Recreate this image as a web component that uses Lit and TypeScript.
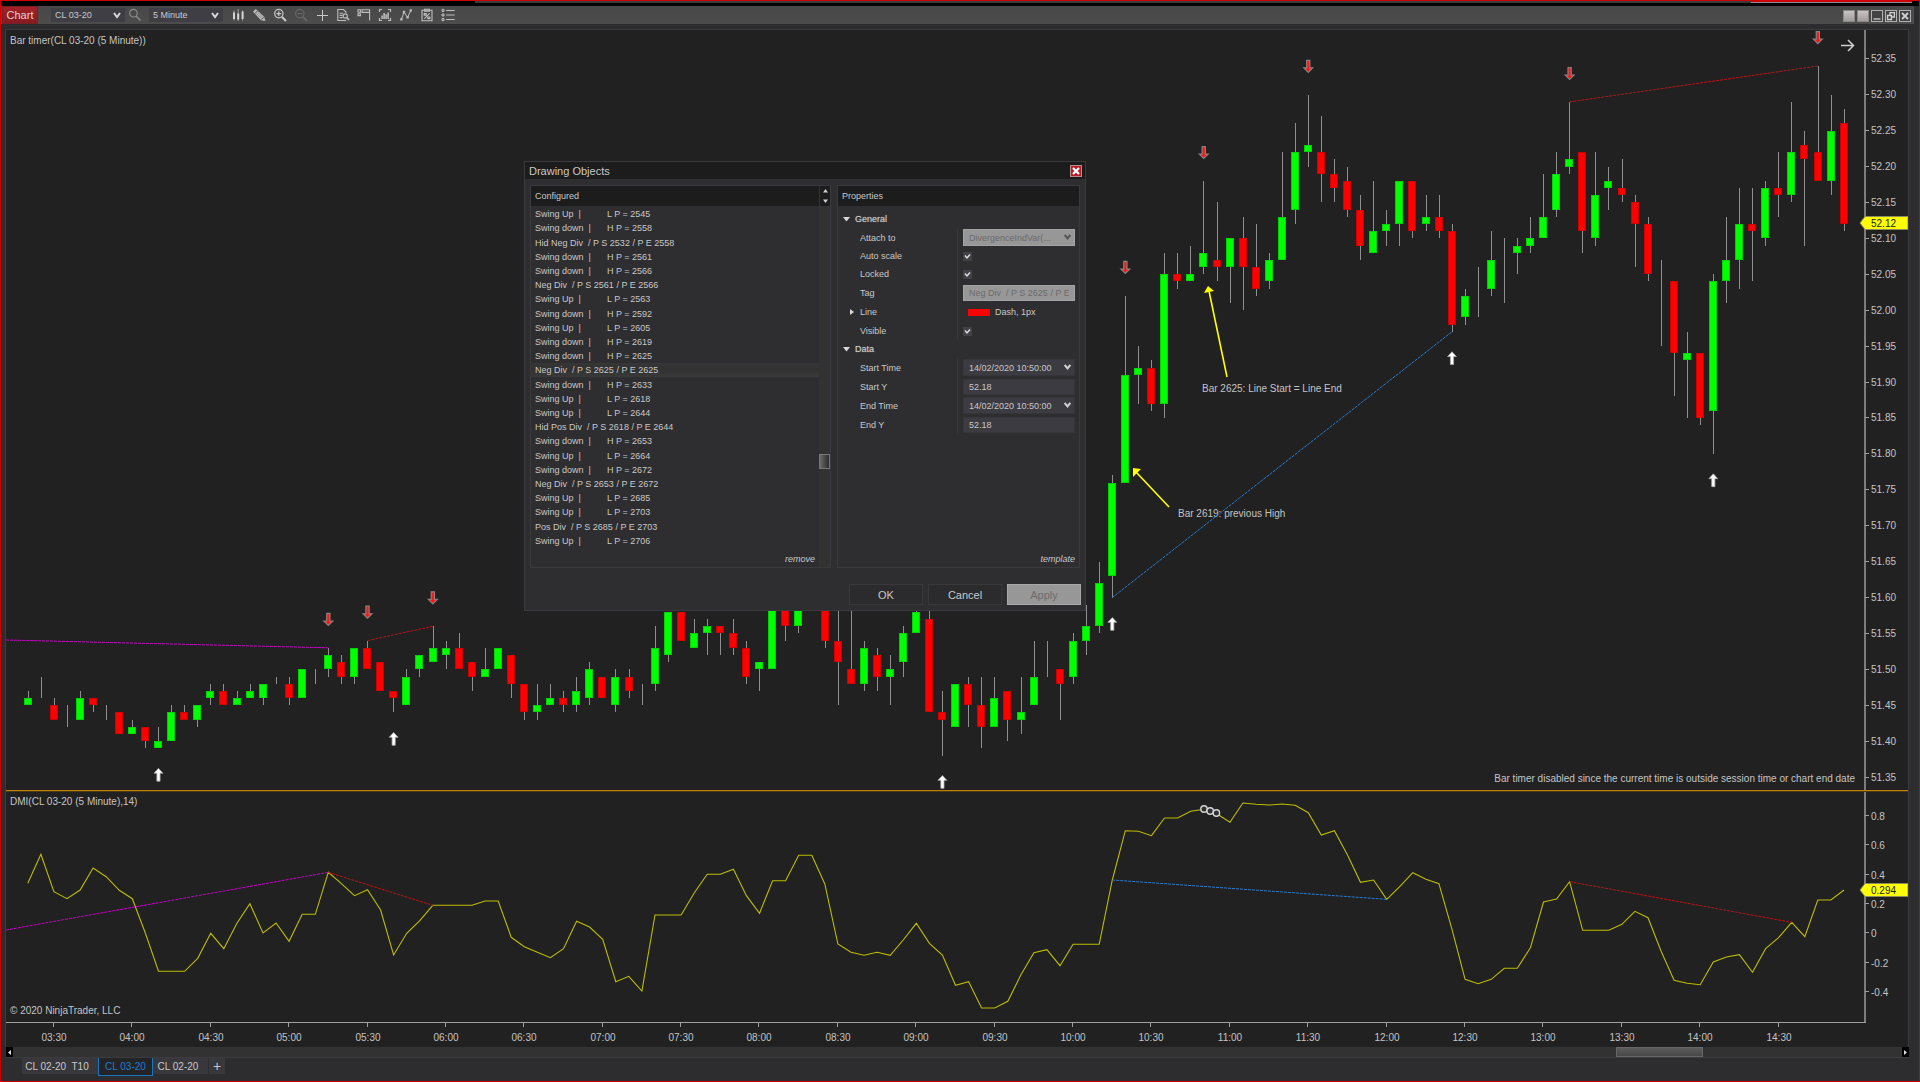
import { LitElement, html, svg, css } from "lit";
import { customElement, property, state } from "lit/decorators.js";
import { classMap } from "lit/directives/class-map.js";

/* ---------- market data ---------- */

type Kind = "up" | "down" | "flat";
interface Bar { kind: Kind; top: number; bottom: number; high: number; low: number }

// One entry per five-minute bar: kind, body top, body bottom, high, low (hundredths above 50.00).
const RAW = `
u146,145,147,145 f149,146,149,146 d145,143,146,143 f145,142,145,142 u146,143,147,143 d146,145,146,144
f145,143,145,143 d144,141,144,141 u142,141,143,141 d142,140,142,139 u140,139,142,139 u144,140,145,140
d144,143,145,143 u145,143,145,142 u147,146,148,145 d147,145,148,145 u146,145,147,145 u147,146,148,146
u148,146,148,145 f149,148,149,148 d148,146,149,145 u150,146,150,146 f150,148,150,148 u152,150,153,149
d151,149,152,148 u153,149,153,148 d153,150,154,150 d151,147,151,147 d147,146,147,144 u149,145,150,145
u152,150,152,149 u153,151,156,151 u153,152,154,150 d153,150,155,150 d151,149,151,147 u150,149,153,149
u153,150,153,150 d152,148,152,146 d148,144,148,143 u145,144,148,143 u146,145,148,145 d146,145,147,144
u147,145,149,144 u150,146,151,145 d149,146,149,146 u149,145,150,144 d149,147,150,146 f148,145,148,145
u153,148,156,147 u158,152,158,151 d158,154,158,154 u155,153,157,153 u156,155,157,152 d156,155,156,152
d155,153,157,152 d153,149,154,148 u151,150,151,147 u160,150,160,150 d160,156,160,154 u160,156,160,155
f162,160,162,160 d160,154,160,153 d154,151,160,145 d150,148,160,148 u153,148,154,147 d152,149,153,147
u150,149,152,145 u155,151,156,149 u158,155,159,155 d157,144,159,144 d144,143,147,138 u148,142,148,142
d148,145,149,142 d145,142,149,139 u146,142,149,142 d147,143,147,140 u144,143,149,141 u149,145,154,145
f154,149,154,149 d150,148,150,143 u154,149,155,148 u156,154,159,152 u162,156,165,155 u176,163,177,160
u191,176,202,176 u192,191,195,187 d192,187,193,186 u205,187,208,185 d205,204,208,203 u205,204,209,204
u208,206,218,205 d207,206,215,204 u210,206,210,201 d210,206,213,200 d206,203,212,202 u207,204,208,203
u213,207,222,207 u222,214,226,212 u223,222,230,220 d222,219,227,215 d219,217,221,215 d218,214,220,213
d214,209,216,207 u211,208,218,208 u212,211,214,209 u218,212,218,209 d218,211,218,210 u213,212,216,211
d213,211,216,210 d211,198,212,197 u202,199,203,198 f206,199,206,199 u207,203,211,202 f210,201,210,201
u209,208,210,205 u210,209,213,208 u213,210,219,210 u219,214,222,213 u221,220,229,219 d222,211,222,208
u216,210,222,209 u218,217,220,214 d217,216,221,215 d215,212,216,206 d212,205,213,204 f207,195,207,195
d204,194,204,188 u194,193,197,185 d194,185,194,184 u204,186,205,180 u207,204,213,201 u212,207,217,203
d212,211,217,204 u217,210,218,209 d217,216,222,213 u222,216,229,215 d223,221,225,209 d222,218,234,218
u225,218,230,216 d226,212,228,211`;

const BARS: Bar[] = RAW.trim().split(/\s+/).map((entry) => {
  const [top, bottom, high, low] = entry.slice(1).split(",").map(Number);
  const kind: Kind = entry[0] === "u" ? "up" : entry[0] === "d" ? "down" : "flat";
  return { kind, top, bottom, high, low };
});

// Oscillator trace, in thirds of a unit below the pane origin.
const DMI = [
  310, 223, 335, 356, 330, 264, 290, 331, 356, 460, 574, 574, 574, 535, 460, 506, 430, 371, 459, 429,
  484, 403, 403, 277, 311, 347, 329, 390, 525, 460, 422, 376, 376, 376, 376, 363, 363, 472, 500, 517,
  533, 506, 424, 441, 478, 605, 589, 633, 405, 405, 405, 339, 283, 283, 268, 347, 400, 302, 302, 226,
  226, 312, 492, 517, 526, 517, 526, 480, 430, 490, 525, 616, 605, 684, 684, 664, 585, 518, 509, 557,
  493, 493, 493, 300, 152, 154, 167, 114, 114, 94, 88, 101, 127, 69, 73, 75, 72, 76, 98, 165,
  152, 225, 307, 300, 358, 320, 278, 298, 311, 448, 598, 611, 598, 565, 565, 503, 366, 357, 305, 451,
  451, 451, 433, 394, 413, 513, 601, 610, 614, 546, 531, 524, 577, 506, 473, 427, 470, 360, 360, 330,
];

const barX = (i: number) => 27.8 + i * 13.066;
const priceY = (tick: number) => 58.8 + (235 - tick) * 7.183;
const dmiY = (third: number) => 780 + third / 3;

const SELL_MARKS = [23, 26, 31, 84, 90, 98, 118, 137];
const BUY_MARKS = [10, 28, 70, 83, 109, 129];
const AXIS_X = 1865;

const pad = (n: number) => String(n).padStart(2, "0");

/* ---------- chart ---------- */

@customElement("price-chart")
class PriceChart extends LitElement {
  static styles = css`
    :host { display: flex; flex-direction: column; font-family: "Liberation Sans", Arial, sans-serif; }
    svg { display: block; width: 100%; height: auto; }
    text { font-size: 10px; fill: #c4c4c4; }
    .splitter { height: 2px; background: linear-gradient(#c08000 50%, #4e3c18 50%); }
    .wick { stroke: #8e8e8e; stroke-width: 1; shape-rendering: crispEdges; }
    .up { fill: #00ff00; stroke: #00d400; }
    .down { fill: #ff0000; stroke: #d00000; }
    .body { stroke-width: 1; shape-rendering: crispEdges; }
    .axis { stroke: #7c7c7c; stroke-width: 2; shape-rendering: crispEdges; }
    .tick { stroke: #a0a0a0; stroke-width: 1; shape-rendering: crispEdges; }
    .trend { fill: none; stroke-width: 1; }
    .magenta { stroke: #c800c8; stroke-dasharray: 3 1; }
    .darkred { stroke: #b81414; stroke-dasharray: 3 1; }
    .blue { stroke: #2a7cd0; stroke-dasharray: 3 1; }
    .dmi { fill: none; stroke: #bcbc00; stroke-width: 1.1; }
    .sell { fill: #ff1414; stroke: #8c8080; stroke-width: 1.2; }
    .buy { fill: #ffffff; stroke: #a8a8a8; stroke-width: 0.8; }
    .note { stroke: #ffff00; stroke-width: 1.6; }
    .note-head { fill: #ffff00; }
    .tag { fill: #ffff00; stroke: #8c8c5a; stroke-width: 1; }
    .tag-text { fill: #202020; }
    .ring { fill: #303030; stroke: #d4d4d4; stroke-width: 1.4; }
    .jump { fill: none; stroke: #d0d0d0; stroke-width: 1.5; }
    .end { text-anchor: end; }
    .mid { text-anchor: middle; }
  `;

  private bar(b: Bar, i: number) {
    const x = Math.round(barX(i) - 0.3);
    const yh = Math.round(priceY(b.high));
    const yl = Math.round(priceY(b.low));
    const yt = Math.round(priceY(b.top));
    const yb = Math.round(priceY(b.bottom));
    return svg`
      <line class="wick" x1=${x + 0.5} x2=${x + 0.5} y1=${yh} y2=${yl}></line>
      ${b.kind === "flat" ? null : svg`
        <rect class="body ${b.kind}" x=${x - 3.5} y=${yt + 0.5} width="7" height=${yb - yt - 1}></rect>`}`;
  }

  private sellMark(i: number) {
    const x = barX(i);
    const y = priceY(BARS[i].high) - 22;
    return svg`<path class="sell" d="M${x - 1.6} ${y - 12.4}h3.2v7.6h2.8L${x} ${y - 0.4}L${x - 4.4} ${y - 4.8}h2.8z"></path>`;
  }

  private buyMark(i: number) {
    const x = barX(i);
    const y = priceY(BARS[i].low) + 20;
    return svg`<path class="buy" d="M${x} ${y}L${x + 4.4} ${y + 4.8}h-2.8v8h-3.2v-8h-2.8z"></path>`;
  }

  private valueTag(y: number, label: string) {
    return svg`
      <path class="tag" d="M1860 ${y}L1865 ${y - 6.5}H1908V${y + 6.5}H1865z"></path>
      <text class="tag-text" x="1871" y=${y + 4}>${label}</text>`;
  }

  private trend(cls: string, x1: number, y1: number, x2: number, y2: number) {
    return svg`<line class="trend ${cls}" x1=${x1} y1=${y1} x2=${x2} y2=${y2}></line>`;
  }

  private pricePane() {
    const levels = Array.from({ length: 21 }, (_, i) => 235 - i * 5);
    return html`
      <svg viewBox="6 30 1902 760" role="img" aria-label="CL 03-20 price">
        ${BARS.map((b, i) => this.bar(b, i))}
        ${this.trend("magenta", 6, 640, barX(23), priceY(153))}
        ${this.trend("darkred", barX(26), priceY(154), barX(31), priceY(156))}
        ${this.trend("darkred", barX(118), priceY(229), barX(137), priceY(234))}
        <text x="1178" y="517">Bar 2619: previous High</text>
        <text x="1202" y="392">Bar 2625: Line Start = Line End</text>
        ${this.trend("blue", barX(83), priceY(160), barX(109), priceY(197))}
        ${SELL_MARKS.map((i) => this.sellMark(i))}
        ${BUY_MARKS.map((i) => this.buyMark(i))}
        <line class="note" x1="1227" y1="377" x2="1209" y2="291"></line>
        <path class="note-head" d="M1208 286L1214 291L1204 293z"></path>
        <line class="note" x1="1169" y1="507" x2="1136" y2="472"></line>
        <path class="note-head" d="M1133 468L1141 469L1133 477z"></path>
        <text x="10" y="44">Bar timer(CL 03-20 (5 Minute))</text>
        <text class="end" x="1855" y="782">Bar timer disabled since the current time is outside session time or chart end date</text>
        <path class="jump" d="M1841 45.5H1853M1848 40L1853.5 45.5L1848 51"></path>
        <line class="axis" x1=${AXIS_X} x2=${AXIS_X} y1="30" y2="790"></line>
        ${levels.map((t) => {
          const y = Math.round(priceY(t) - 0.5);
          return svg`
            <line class="tick" x1=${AXIS_X} x2=${AXIS_X + 4} y1=${y + 0.5} y2=${y + 0.5}></line>
            <text x="1871" y=${y + 4}>${(50 + t / 100).toFixed(2)}</text>`;
        })}
        ${this.valueTag(223, "52.12")}
      </svg>`;
  }

  private dmiPane() {
    const points = DMI.map((v, i) => `${barX(i).toFixed(1)},${dmiY(v).toFixed(1)}`).join(" ");
    const levels = ["0.8", "0.6", "0.4", "0.2", "0", "-0.2", "-0.4"];
    return html`
      <svg viewBox="6 792 1902 231" role="img" aria-label="DMI indicator">
        <polyline class="dmi" points=${points}></polyline>
        ${this.trend("magenta", 6, 930, barX(23), dmiY(277))}
        ${this.trend("darkred", barX(23), dmiY(277), barX(31), dmiY(376))}
        ${this.trend("blue", barX(83), dmiY(300), barX(104), dmiY(358))}
        ${this.trend("darkred", barX(118), dmiY(305), barX(135), dmiY(427))}
        ${[0, 1, 2].map((n) => svg`<circle class="ring" cx=${1204 + n * 6.2} cy=${809 + n * 2} r="3.2"></circle>`)}
        <text x="10" y="805">DMI(CL 03-20 (5 Minute),14)</text>
        <text x="10" y="1014">© 2020 NinjaTrader, LLC</text>
        <line class="axis" x1=${AXIS_X} x2=${AXIS_X} y1="792" y2="1022"></line>
        <line class="tick" x1="6" x2=${AXIS_X + 1} y1="1022.5" y2="1022.5"></line>
        ${levels.map((label, i) => {
          const y = Math.round(816 + i * 29.3);
          return svg`
            <line class="tick" x1=${AXIS_X} x2=${AXIS_X + 4} y1=${y - 0.5} y2=${y - 0.5}></line>
            <text x="1871" y=${y + 4}>${label}</text>`;
        })}
        ${this.valueTag(890, "0.294")}
      </svg>`;
  }

  private timeAxis() {
    const labels = Array.from({ length: 23 }, (_, i) => {
      const minutes = 210 + i * 30;
      return { x: Math.round(barX(2 + i * 6)), text: `${pad(Math.floor(minutes / 60))}:${pad(minutes % 60)}` };
    });
    return html`
      <svg viewBox="6 1023 1902 24" role="img" aria-label="Time axis">
        ${labels.map((l) => svg`
          <line class="tick" x1=${l.x - 0.5} x2=${l.x - 0.5} y1="1023" y2="1027"></line>
          <text class="mid" x=${l.x} y="1041">${l.text}</text>`)}
      </svg>`;
  }

  render() {
    return html`${this.pricePane()}<div class="splitter"></div>${this.dmiPane()}${this.timeAxis()}`;
  }
}

/* ---------- drawing objects dialog ---------- */

const swing = (dir: "Up" | "down", at: number) => ({
  lead: `Swing ${dir}  |`,
  rest: `${dir === "Up" ? "L" : "H"} P = ${at}`,
});
const div = (name: string, from: number, to: number) => ({ lead: `${name} Div  / P S ${from} / P E ${to}`, rest: "" });

const OBJECTS = [
  swing("Up", 2545), swing("down", 2558), div("Hid Neg", 2532, 2558), swing("down", 2561),
  swing("down", 2566), div("Neg", 2561, 2566), swing("Up", 2563), swing("down", 2592),
  swing("Up", 2605), swing("down", 2619), swing("down", 2625), div("Neg", 2625, 2625),
  swing("down", 2633), swing("Up", 2618), swing("Up", 2644), div("Hid Pos", 2618, 2644),
  swing("down", 2653), swing("Up", 2664), swing("down", 2672), div("Neg", 2653, 2672),
  swing("Up", 2685), swing("Up", 2703), div("Pos", 2685, 2703), swing("Up", 2706),
];

@customElement("drawing-objects-dialog")
class DrawingObjectsDialog extends LitElement {
  @state() private selected = 11;

  static styles = css`
    :host { display: block; font: 9px "Liberation Sans", Arial, sans-serif; color: #c8c8c8; }
    * { box-sizing: border-box; }
    button, input, select { font: inherit; color: inherit; margin: 0; border-radius: 0; }
    .window { height: 100%; display: flex; flex-direction: column; background: #2e2e30; border: 1px solid #3a3a3e; }
    .title { display: flex; align-items: center; justify-content: space-between; height: 17px; padding: 0 3px 0 4px; background: #1c1c1c; font-size: 11px; flex: none; }
    .title h1 { margin: 0; font: inherit; }
    .close { display: flex; width: 12px; height: 12px; padding: 0; background: #b3202a; border: 1px solid #b98c8c; }
    .close svg { width: 10px; height: 10px; }
    .panels { flex: 1; display: grid; grid-template-columns: 301px 1fr; gap: 6px; padding: 6px 5px 0 5px; min-height: 0; }
    .panel { display: flex; flex-direction: column; border: 1px solid #3a3a3e; min-height: 0; }
    .head { display: flex; align-items: center; justify-content: space-between; height: 20px; padding-left: 4px; background: #1c1c1c; flex: none; }
    .head h2 { margin: 0; font: inherit; }
    .spin { display: flex; flex-direction: column; justify-content: space-between; align-items: center; width: 11px; height: 100%; padding: 3px 0; border-left: 1px solid #333336; }
    .spin svg { width: 5px; height: 4px; fill: #d0d0d0; }
    .body { flex: 1; display: grid; grid-template-columns: 1fr 11px; min-height: 0; }
    .list { display: grid; grid-template-rows: repeat(24, 1fr); height: 341px; margin: 1px 0 0; padding: 0; list-style: none; }
    .item { display: grid; grid-template-columns: 72px 1fr; align-items: center; width: 100%; height: 100%; padding: 0 4px; background: none; border: 0; text-align: left; white-space: pre; }
    .item.wide { display: block; }
    .item.current { background: linear-gradient(#363636, #323232, #3a3a3a); }
    .left { display: flex; flex-direction: column; justify-content: space-between; }
    .link { align-self: flex-end; padding: 0 4px 3px 0; background: none; border: 0; font-style: italic; }
    .track { background: #323232; display: flex; flex-direction: column; }
    .track::before { content: ""; flex: 249 0 0; }
    .track::after { content: ""; flex: 98 0 0; }
    .thumb { height: 15px; background: linear-gradient(90deg, #6a6a6a, #2c2c2c); border: 1px solid #777; }
    .props { flex: 1; padding-top: 4px; }
    .group { display: flex; align-items: center; gap: 5px; height: 18px; margin: 0; padding: 0 0 0 5px; background: none; border: 0; text-shadow: 0 0 1px #999; }
    .group svg { width: 7px; height: 5px; fill: #d8d8d8; }
    .row { display: grid; grid-template-columns: 98px 1fr; align-items: center; height: 19px; padding: 0 4px 0 22px; position: relative; }
    .cap { align-self: stretch; display: flex; align-items: center; border-right: 1px solid #38383c; }
    .row.short { height: 18px; }
    .row.tall { height: 20px; }
    .marker { position: absolute; left: 12px; top: 7px; width: 4px; height: 6px; fill: #d8d8d8; }
    .field { position: relative; display: flex; margin-left: 5px; }
    .field svg { position: absolute; right: 4px; top: 5px; width: 7px; height: 6px; fill: none; stroke: #d0d0d0; stroke-width: 2; pointer-events: none; }
    select, .text { appearance: none; width: 100%; height: 17px; padding: 0 5px; background: #3c3b42; border: 1px solid #35353a; outline: none; }
    .text { height: 16px; }
    select:disabled, .text:disabled { background: #979797; border-color: #a4a4a4; color: #6c6c6c; opacity: 1; }
    .dim svg { stroke: #555; }
    .box { display: flex; width: 9px; height: 9px; margin-left: 5px; position: relative; }
    .box input { appearance: none; width: 9px; height: 9px; background: #424148; }
    .box svg { position: absolute; inset: 1px; width: 7px; height: 7px; fill: none; stroke: #e0e0e0; stroke-width: 1.4; visibility: hidden; pointer-events: none; }
    .box input:checked + svg { visibility: visible; }
    .stroke { display: flex; align-items: center; gap: 5px; margin-left: 5px; padding: 0 0 0 5px; background: none; border: 0; }
    .swatch { width: 22px; height: 7px; background: #ff0000; }
    .panel-foot { display: flex; justify-content: flex-end; }
    .actions { display: flex; justify-content: flex-end; gap: 5px; padding: 16px 4px 5px 0; }
    .btn { width: 74px; height: 21px; padding: 0; background: #2b2b2d; border: 1px solid #39393d; font-size: 11px; }
    .btn:disabled { background: #979797; border-color: #a8a8a8; color: #6c6c6c; }
  `;

  private chevron() {
    return html`<svg viewBox="0 0 7 6" aria-hidden="true"><path d="M0.7 1L3.5 4.4L6.3 1"></path></svg>`;
  }

  private check(label: string, id: string) {
    return html`
      <div class="row short">
        <label class="cap" for=${id}>${label}</label>
        <span class="box"><input id=${id} type="checkbox" checked />
          <svg viewBox="0 0 7 7" aria-hidden="true"><path d="M1 2.5L3 5L6 1.5"></path></svg></span>
      </div>`;
  }

  private choice(label: string, id: string, value: string, disabled = false) {
    return html`
      <div class="row">
        <label class="cap" for=${id}>${label}</label>
        <span class=${classMap({ field: true, dim: disabled })}>
          <select id=${id} ?disabled=${disabled}><option>${value}</option></select>${this.chevron()}
        </span>
      </div>`;
  }

  private entry(label: string, id: string, value: string, disabled = false) {
    return html`
      <div class="row">
        <label class="cap" for=${id}>${label}</label>
        <span class="field"><input class="text" id=${id} type="text" .value=${value} ?disabled=${disabled} /></span>
      </div>`;
  }

  private group(label: string) {
    return html`<button class="group"><svg viewBox="0 0 7 5" aria-hidden="true"><path d="M0 0h7L3.5 4.5z"></path></svg>${label}</button>`;
  }

  render() {
    return html`
      <div class="window" role="dialog" aria-label="Drawing Objects">
        <div class="title">
          <h1>Drawing Objects</h1>
          <button class="close" aria-label="Close">
            <svg viewBox="0 0 10 10"><path d="M2 2L8 8M8 2L2 8" stroke="#fff" stroke-width="2.2"></path></svg>
          </button>
        </div>
        <div class="panels">
          <section class="panel">
            <div class="head">
              <h2>Configured</h2>
              <span class="spin">
                <svg viewBox="0 0 5 4"><path d="M2.5 0L5 3.5H0z"></path></svg>
                <svg viewBox="0 0 5 4"><path d="M2.5 4L5 0.5H0z"></path></svg>
              </span>
            </div>
            <div class="body">
              <div class="left">
                <ul class="list">
                  ${OBJECTS.map((o, i) => html`
                    <li><button class=${classMap({ item: true, wide: !o.rest, current: i === this.selected })}
                      @click=${() => (this.selected = i)}><span>${o.lead}</span>${o.rest ? html`<span>${o.rest}</span>` : null}</button></li>`)}
                </ul>
                <button class="link">remove</button>
              </div>
              <div class="track"><div class="thumb"></div></div>
            </div>
          </section>
          <section class="panel">
            <div class="head"><h2>Properties</h2></div>
            <div class="props">
              ${this.group("General")}
              ${this.choice("Attach to", "attach", "DivergenceIndVar(...", true)}
              ${this.check("Auto scale", "autoscale")}
              ${this.check("Locked", "locked")}
              ${this.entry("Tag", "tag", "Neg Div  / P S 2625 / P E 2625", true)}
              <div class="row tall">
                <span class="cap">Line</span>
                <button class="stroke"><span class="swatch"></span>Dash, 1px</button>
                <svg class="marker" viewBox="0 0 4 6"><path d="M0 0L4 3L0 6z"></path></svg>
              </div>
              ${this.check("Visible", "visible")}
              ${this.group("Data")}
              ${this.choice("Start Time", "start-time", "14/02/2020 10:50:00")}
              ${this.entry("Start Y", "start-y", "52.18")}
              ${this.choice("End Time", "end-time", "14/02/2020 10:50:00")}
              ${this.entry("End Y", "end-y", "52.18")}
            </div>
            <div class="panel-foot"><button class="link">template</button></div>
          </section>
        </div>
        <div class="actions">
          <button class="btn">OK</button>
          <button class="btn">Cancel</button>
          <button class="btn" disabled>Apply</button>
        </div>
      </div>`;
  }
}

/* ---------- toolbar icons, drawn on a 14-unit grid ---------- */

const ICONS: Record<string, unknown> = {
  search: svg`<g fill="none" stroke="#8a8a8a" stroke-width="1.2"><circle cx="5.4" cy="5.2" r="3.8"/><path d="M8 8L12.5 12.5" stroke-width="1.6"/></g>`,
  bars: svg`<path d="M3 2.5v10M7.2 1v12M11.6 2.5v10" stroke="#b8b8b8" stroke-width="0.8"/><path d="M2 4.6h2V11H2zM6.2 5.5h2v6h-2zM10.6 3.6h2v7.4h-2z" fill="#d4d4d4"/>`,
  pencil: svg`<path d="M1 3.8L3.8 1L12.2 8.8L13.4 13L9 12.2z" fill="#bcbcbc"/><path d="M2.8 5.6L5.6 2.8" stroke="#4a4a4a"/><path d="M4.4 5.4L10.2 11M5.6 4.2L11.4 9.8" stroke="#777" stroke-width="0.6"/><path d="M9.4 11.6L11.8 9.2" stroke="#4a4a4a" stroke-width="0.8"/>`,
  zoomIn: svg`<g fill="none" stroke="#c8c8c8" stroke-width="1.2"><circle cx="5.8" cy="5.6" r="4.2"/><path d="M3.4 5.6h4.8M5.8 3.2v4.8"/><path d="M9 9L13 13" stroke-width="2.2"/></g>`,
  zoomOut: svg`<g fill="none" stroke="#666" stroke-width="1.2"><circle cx="5.8" cy="5.6" r="4.2"/><path d="M3.4 5.6h4.8"/><path d="M9 9L13 13" stroke-width="2"/></g>`,
  cross: svg`<path d="M7.5 2v11M2 7.5h11" stroke="#c8c8c8" stroke-width="1"/>`,
  doc: svg`<g fill="none" stroke="#bdbdbd" stroke-width="1.1"><path d="M10 5V4L7.4 1.5H1.8v11h8.4"/><path d="M3.6 5.2h3.6M3.6 7.4h3M3.6 9.6h3"/><circle cx="9.2" cy="8" r="2.1"/><path d="M10.8 9.6L13 12" stroke-width="1.6"/></g>`,
  panel: svg`<g fill="none" stroke="#bdbdbd" stroke-width="1.1"><path d="M1 1.8h2.4v2.4H1zM1 5.8h2.4v1.8H1z"/><path d="M5 1.8h7.6v2.6H5z"/><path d="M12.6 4.4v8"/></g>`,
  snapshot: svg`<path d="M1.5 4V1.5H4M10 1.5h2.5V4M12.5 10v2.5H10M4 12.5H1.5V10" fill="none" stroke="#c0c0c0" stroke-width="1.2"/><path d="M3.4 7.4h1.4V11H3.4zM5.4 5h1.4v6H5.4zM7.4 6.2h1.4V11H7.4zM9.4 4.4h1.4V11H9.4z" fill="#c8c8c8"/>`,
  nodes: svg`<path d="M2.4 11.4L5 4L8.6 9.4L11.8 2.4" fill="none" stroke="#c0c0c0" stroke-width="1"/><path d="M1.2 10.2h2.4v2.4H1.2zM3.8 2.8h2.4v2.4H3.8zM7.4 8.2h2.4v2.4H7.4zM10.6 1.2H13v2.4h-2.4z" fill="#bcbcbc"/>`,
  clipboard: svg`<g fill="none" stroke="#c0c0c0" stroke-width="1.1"><path d="M2 2.2h10v10.6H2z"/><path d="M4.6 1.2h4.8v2H4.6z"/><path d="M4.4 10.6L9.6 5.4"/><path d="M4.2 5.6h2v1.6h-2zM7.8 9h2v1.6h-2z"/></g>`,
  list: svg`<g fill="none" stroke="#c0c0c0" stroke-width="1"><path d="M1 1.4h2v2H1zM1 6h2v2H1zM1 10.6h2v2H1z"/><path d="M5.2 2.5h8.4M5.2 7h8.4M5.2 11.5h8.4"/></g>`,
};

@customElement("tool-icon")
class ToolIcon extends LitElement {
  @property() name = "";
  static styles = css`
    :host { display: flex; }
    svg { width: 14px; height: 14px; }
  `;
  render() {
    return html`<svg viewBox="0 0 14 14" aria-hidden="true">${ICONS[this.name]}</svg>`;
  }
}

const TOOLS = [
  ["bars", "Bar style"], ["pencil", "Draw"], ["zoomIn", "Zoom in"], ["zoomOut", "Zoom out"],
  ["cross", "Crosshair"], ["doc", "Data box"], ["panel", "Chart trader"], ["snapshot", "Data series"],
  ["nodes", "Indicators"], ["clipboard", "Strategies"], ["list", "Properties"],
];

/* ---------- application window ---------- */

@customElement("app-root")
class AppRoot extends LitElement {
  static styles = css`
    :host { display: block; font: 10px "Liberation Sans", Arial, sans-serif; color: #c8c8c8; }
    * { box-sizing: border-box; }
    button, select { font: inherit; color: inherit; margin: 0; border-radius: 0; }
    .app { display: flex; flex-direction: column; min-height: 100vh; background: #2d2d30; border: 1px solid #d00000; }
    .strip { display: grid; grid-template-columns: 474fr 1276fr 161fr 7fr; height: 5px; background: #000; }
    .strip span { height: 2px; background: #3a3a3a; }
    .strip .accent { border-top: 1px solid #d00000; background: #8a8a8e; }
    .toolbar { display: flex; align-items: center; height: 18px; margin-right: 5px; padding: 0 3px 0 1px; background: linear-gradient(#484848, #4c4c4c); }
    .menu { width: 36px; height: 18px; margin-right: 13px; padding: 0; background: linear-gradient(#a32127, #861a1f); border: 1px solid #7a2024; font-size: 11px; color: #e0d4d4; }
    .combo { position: relative; width: 74px; height: 14px; }
    .combo select { appearance: none; display: block; width: 100%; height: 14px; padding: 0 4px; background: #3f3e45; border: 0; font-size: 9px; }
    .combo svg { position: absolute; right: 4px; top: 4px; width: 8px; height: 7px; fill: none; stroke: #d8d8d8; stroke-width: 2; pointer-events: none; }
    .icon { display: flex; align-items: center; justify-content: center; width: 21px; height: 18px; padding: 0; background: none; border: 0; }
    .find { width: 24px; padding-right: 4px; }
    .tools { display: flex; margin-left: 4px; }
    .spacer { flex: 1; }
    .controls { display: flex; gap: 2px; padding-top: 2px; }
    .ctl { display: flex; width: 12px; height: 12px; padding: 0; background: #444; border: 1px solid #b0b0b0; }
    .ctl.link { background: linear-gradient(#c8c4c4, #a09c9c); border-color: #8c8888; }
    .ctl svg { width: 10px; height: 10px; fill: none; stroke: #d0d0d0; stroke-width: 1.3; }
    .work { position: relative; margin: 5px 10px 0 4px; border: 1px solid #3c3c40; border-bottom: 0; background: #212121; }
    .dialog { position: absolute; left: 518px; top: 131px; width: 562px; height: 450px; }
    .scroll { display: flex; align-items: stretch; height: 11px; margin: 0 10px 0 5px; background: #323232; border-bottom: 1px solid #3c3c40; }
    .arrow { display: flex; align-items: center; justify-content: center; width: 7px; padding: 0; background: #000; border: 0; }
    .arrow svg { width: 3px; height: 5px; fill: #ddd; }
    .lane { flex: 1; display: grid; grid-template-columns: 1600fr 87fr 199fr; }
    .thumb { grid-column: 2; background: linear-gradient(#5c5c5c, #484848); border: 1px solid #666; }
    .tabs { display: flex; align-items: flex-start; margin: 0 0 0 21px; }
    .tab { height: 16px; padding: 0; background: #38373c; border: 0; white-space: pre; }
    .tab.first { width: 76px; padding-right: 6px; }
    .tab.active { width: 55px; height: 18px; background: #242426; border: 1px solid #1676bf; border-top: 0; color: #1a7fcc; }
    .tab.other { width: 55px; padding-right: 5px; }
    .tab.add { width: 17px; border-left: 1px solid #2c2c2e; font-size: 14px; line-height: 14px; }
  `;

  private combo(label: string, value: string) {
    return html`
      <span class="combo">
        <select aria-label=${label}><option>${value}</option></select>
        <svg viewBox="0 0 8 7" aria-hidden="true"><path d="M1 1L4 5L7 1"></path></svg>
      </span>`;
  }

  render() {
    return html`
      <div class="app">
        <div class="strip"><i></i><span></span><span class="accent"></span></div>
        <header class="toolbar">
          <button class="menu">Chart</button>
          ${this.combo("Instrument", "CL 03-20")}
          <button class="icon find" aria-label="Find instrument"><tool-icon name="search"></tool-icon></button>
          ${this.combo("Interval", "5 Minute")}
          <nav class="tools">
            ${TOOLS.map(([name, label]) => html`<button class="icon" aria-label=${label}><tool-icon name=${name}></tool-icon></button>`)}
          </nav>
          <span class="spacer"></span>
          <div class="controls">
            <button class="ctl link" aria-label="Instrument link"></button>
            <button class="ctl link" aria-label="Interval link"></button>
            <button class="ctl" aria-label="Minimize"><svg viewBox="0 0 10 10"><path d="M1.5 8h7"></path></svg></button>
            <button class="ctl" aria-label="Restore"><svg viewBox="0 0 10 10"><path d="M1.5 4.5h4v4h-4zM4 4V1.7h4.4V6H6"></path></svg></button>
            <button class="ctl" aria-label="Close"><svg viewBox="0 0 10 10"><path d="M2 2L8 8M8 2L2 8" stroke-width="1.8"></path></svg></button>
          </div>
        </header>
        <main class="work">
          <price-chart></price-chart>
          <drawing-objects-dialog class="dialog"></drawing-objects-dialog>
        </main>
        <div class="scroll">
          <button class="arrow" aria-label="Scroll left"><svg viewBox="0 0 3 5"><path d="M3 0v5L0 2.5z"></path></svg></button>
          <div class="lane"><div class="thumb"></div></div>
          <button class="arrow" aria-label="Scroll right"><svg viewBox="0 0 3 5"><path d="M0 0v5L3 2.5z"></path></svg></button>
        </div>
        <footer class="tabs">
          <button class="tab first">CL 02-20  T10</button>
          <button class="tab active">CL 03-20</button>
          <button class="tab other">CL 02-20</button>
          <button class="tab add" aria-label="Add tab">+</button>
        </footer>
      </div>`;
  }
}
